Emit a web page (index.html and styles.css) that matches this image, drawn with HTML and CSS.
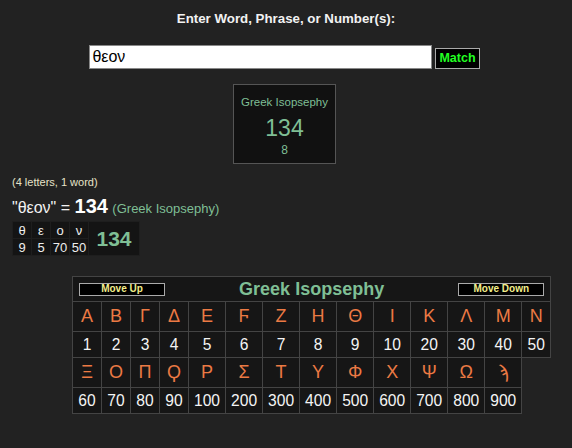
FILE: index.html
```html
<!DOCTYPE html>
<html lang="en">
<head>
    <meta charset="UTF-8">
    <title>Gematrix Isopsephy</title>
    <link rel="stylesheet" href="styles.css">
</head>
<body>
    <h2 class="prompt">Enter Word, Phrase, or Number(s):</h2>
    <form class="search">
        <input class="search-input" type="text" value="θεον">
        <button class="match" type="button">Match</button>
    </form>

    <div class="result-box">
        <div class="cipher-name">Greek Isopsephy</div>
        <div class="cipher-total">134</div>
        <div class="cipher-reduced">8</div>
    </div>

    <div class="counts">(4 letters, 1 word)</div>
    <div class="equation">
        <span class="phrase">"θεον" = </span><span class="total">134</span>
        <span class="cipher">(Greek Isopsephy)</span>
    </div>

    <table class="breakdown">
        <tr>
            <td>θ</td><td>ε</td><td>ο</td><td>ν</td>
            <td class="sum" rowspan="2">134</td>
        </tr>
        <tr>
            <td>9</td><td>5</td><td>70</td><td>50</td>
        </tr>
    </table>

    <table class="chart">
        <tr>
            <td class="chart-head" colspan="14">
                <div class="head-bar">
                    <button class="move" type="button">Move Up</button>
                    <span class="chart-title">Greek Isopsephy</span>
                    <button class="move" type="button">Move Down</button>
                </div>
            </td>
        </tr>
        <tr class="letters">
            <td>Α</td><td>Β</td><td>Γ</td><td>Δ</td><td>Ε</td><td>Ϝ</td><td>Ζ</td>
            <td>Η</td><td>Θ</td><td>Ι</td><td>Κ</td><td>Λ</td><td>Μ</td><td>Ν</td>
        </tr>
        <tr class="values">
            <td>1</td><td>2</td><td>3</td><td>4</td><td>5</td><td>6</td><td>7</td>
            <td>8</td><td>9</td><td>10</td><td>20</td><td>30</td><td>40</td><td>50</td>
        </tr>
        <tr class="letters">
            <td>Ξ</td><td>Ο</td><td>Π</td><td>Ϙ</td><td>Ρ</td><td>Σ</td><td>Τ</td>
            <td>Υ</td><td>Φ</td><td>Χ</td><td>Ψ</td><td>Ω</td><td>ϡ</td>
        </tr>
        <tr class="values">
            <td>60</td><td>70</td><td>80</td><td>90</td><td>100</td><td>200</td><td>300</td>
            <td>400</td><td>500</td><td>600</td><td>700</td><td>800</td><td>900</td>
        </tr>
    </table>
</body>
</html>
```

FILE: styles.css
```css
body {
    margin: 0;
    padding: 0 12px;
    background-color: #222;
    color: #eee;
    font-family: "Liberation Sans", Arial, sans-serif;
}
.prompt {
    margin: 0;
    padding-top: 11px;
    font-size: 13.3px;
    text-align: center;
    color: #f2f2f2;
}
.search {
    display: flex;
    justify-content: center;
    align-items: center;
    gap: 3px;
    margin: 19px 3px 0 0;
}
.search-input {
    width: 337px;
    height: 22px;
    padding: 0 2px;
    margin: 0;
    border: 1px solid #888;
    background-color: #fff;
    color: #000;
    font-family: "Liberation Sans", Arial, sans-serif;
    font-size: 16px;
}
.match {
    height: 21px;
    padding: 0 3px;
    margin-top: 2px;
    background-color: #000;
    border: 1px solid #aaa;
    color: #2f2;
    font-family: "Liberation Sans", Arial, sans-serif;
    font-weight: bold;
    font-size: 12.5px;
}
.result-box {
    width: 101px;
    height: 78px;
    margin: 15px 0 0 221px;
    background-color: #111;
    border: 1px solid #555;
    text-align: center;
    color: #7fbf95;
}
.cipher-name {
    margin-top: 11px;
    font-size: 11.5px;
}
.cipher-total {
    font-size: 23px;
    line-height: 28px;
    margin-top: 6px;
}
.cipher-reduced {
    font-size: 12px;
    margin-top: 1px;
}
.counts {
    margin-top: 12px;
    font-size: 11px;
    color: #e6e2c8;
}
.equation {
    margin-top: 7px;
    height: 21px;
}
.phrase {
    font-size: 16px;
    color: #f2f2f2;
}
.total {
    font-size: 20px;
    font-weight: bold;
    color: #fff;
}
.cipher {
    font-size: 13px;
    color: #7fbf95;
}
.breakdown {
    border-collapse: collapse;
    margin-top: 5px;
    background-color: #141414;
}
.breakdown td {
    width: 18px;
    min-width: 18px;
    height: 16px;
    padding: 0;
    border: 1px solid #1e1e1e;
    text-align: center;
    font-size: 13px;
    color: #eee;
}
.breakdown td.sum {
    width: 50px;
    font-size: 21px;
    font-weight: bold;
    color: #7fbf95;
}
.chart {
    border-collapse: collapse;
    margin: 20px 0 0 60px;
}
.chart td {
    padding: 0 5px;
    border: 1px solid #444;
    background-color: #161616;
    text-align: center;
}
.chart td.chart-head {
    height: 24px;
    padding: 0 6px;
}
.head-bar {
    display: flex;
    justify-content: space-between;
    align-items: center;
}
.move {
    width: 86px;
    height: 13px;
    padding: 0;
    background-color: #000;
    border: 1px solid #aaa;
    color: #f2ee8a;
    font-family: "Liberation Sans", Arial, sans-serif;
    font-weight: bold;
    font-size: 10px;
    line-height: 10px;
}
.chart-title {
    font-size: 18px;
    font-weight: bold;
    color: #7fbf95;
}
.letters td {
    height: 29px;
    font-size: 18px;
    color: #ec7a44;
}
.values td {
    width: 18px;
    height: 25px;
    font-size: 15.6px;
    color: #f4f4f4;
}
```
